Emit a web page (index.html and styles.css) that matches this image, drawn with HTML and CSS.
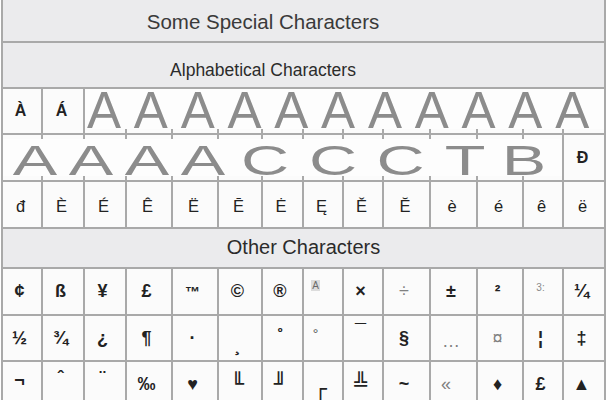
FILE: index.html
```html
<!DOCTYPE html>
<html>
<head>
<meta charset="utf-8">
<title>Some Special Characters</title>
<link rel="stylesheet" href="styles.css">
</head>
<body>
<div class="table">
  <div class="head title">Some Special Characters</div>
  <div class="head sub">Alphabetical Characters</div>

  <div class="stack s46">
    <div class="row h46">
      <div class="c b">À</div><div class="c b">Á</div>
      <div class="c"></div><div class="c"></div><div class="c"></div><div class="c"></div>
      <div class="c"></div><div class="c"></div><div class="c"></div><div class="c"></div>
      <div class="c"></div><div class="c"></div><div class="c"></div><div class="c"></div>
    </div>
    <div class="over over1">AAAAAAAAAAA</div>
  </div>

  <div class="stack s47">
    <div class="row h47">
      <div class="c"></div><div class="c"></div><div class="c"></div><div class="c"></div>
      <div class="c"></div><div class="c"></div><div class="c"></div><div class="c"></div>
      <div class="c"></div><div class="c"></div><div class="c"></div><div class="c"></div>
      <div class="c"></div><div class="c b">Đ</div>
    </div>
    <div class="over over2">
      <span class="wa">A</span><span class="wa">A</span><span class="wa">A</span><span class="wa">A</span>
      <span class="wc">C</span><span class="wc">C</span><span class="wc2">C</span><span class="wt">T</span><span class="wb">B</span>
    </div>
  </div>

  <div class="row h47 letters">
    <div class="c">đ</div><div class="c">È</div><div class="c">É</div><div class="c">Ê</div>
    <div class="c">Ë</div><div class="c">Ē</div><div class="c">Ė</div><div class="c">Ę</div>
    <div class="c">Ě</div><div class="c">Ĕ</div><div class="c">è</div><div class="c">é</div>
    <div class="c">ê</div><div class="c">ë</div>
  </div>

  <div class="head other">Other Characters</div>

  <div class="row h47 syms">
    <div class="c">¢</div><div class="c">ß</div><div class="c">¥</div><div class="c">£</div>
    <div class="c"><span class="tm">™</span></div><div class="c">©</div><div class="c">®</div>
    <div class="c"><span class="boxa">A</span></div>
    <div class="c">×</div><div class="c grey">÷</div><div class="c">±</div>
    <div class="c"><span class="sup">²</span></div>
    <div class="c"><span class="three">3:</span></div>
    <div class="c">¼</div>
  </div>

  <div class="row h46 syms">
    <div class="c">½</div><div class="c">¾</div><div class="c">¿</div><div class="c">¶</div>
    <div class="c">·</div><div class="c"><span class="ced">¸</span></div>
    <div class="c"><span class="ord">º</span></div><div class="c"><span class="deg">°</span></div>
    <div class="c"><span class="mac">¯</span></div><div class="c">§</div>
    <div class="c grey"><span class="ell">…</span></div><div class="c grey">¤</div>
    <div class="c">¦</div><div class="c">‡</div>
  </div>

  <div class="row h46 syms">
    <div class="c"><span class="hi">¬</span></div><div class="c"><span class="hi2">ˆ</span></div>
    <div class="c"><span class="hi2">¨</span></div><div class="c">‰</div>
    <div class="c">♥</div><div class="c box">╙</div><div class="c box">╜</div>
    <div class="c box"><span class="low">┌</span></div><div class="c box">╩</div>
    <div class="c">~</div><div class="c grey"><span class="lq">«</span></div><div class="c">♦</div>
    <div class="c">£</div><div class="c">▲</div>
  </div>
</div>
</body>
</html>
```
FILE: styles.css
```css
body {
  margin: 0;
  background: #ffffff;
  font-family: "Liberation Sans", Arial, sans-serif;
}

.table {
  width: 603px;
  margin-left: 1px;
  border-left: 2px solid #a9a9a9;
}

.head {
  box-sizing: border-box;
  border-right: 2px solid #a9a9a9;
  border-bottom: 2px solid #a9a9a9;
  background: #ebebed;
  text-align: center;
  color: #2b2b2b;
  line-height: normal;
}

.title {
  height: 43px;
  font-size: 20.5px;
  padding: 10px 81px 0 0;
  color: #3a3a3a;
}

.sub {
  height: 46px;
  font-size: 17.5px;
  padding: 17px 81px 0 0;
}

.other {
  height: 40px;
  font-size: 20px;
  padding-top: 7px;
}

.row {
  display: grid;
  grid-template-columns: 40px 42px 42px 46px 46px 44px 41px 40px 40px 47px 47px 46px 40px 42px;
}

.h46 { height: 46px; }
.h47 { height: 47px; }

.c {
  box-sizing: border-box;
  border-right: 2px solid #a9a9a9;
  border-bottom: 2px solid #a9a9a9;
  background: #fbfbfb;
  display: flex;
  align-items: center;
  justify-content: center;
  font-size: 16px;
  color: #222;
  padding-right: 3px;
}

.b { font-weight: bold; }

.stack { display: grid; }
.s46 { grid-template-rows: 46px; }
.s47 { grid-template-rows: 47px; }
.stack > * { grid-area: 1 / 1; }

.over {
  background: #fdfdfd;
  color: #8c8c8c;
  white-space: nowrap;
  z-index: 1;
}

.over1 {
  margin: 0 2px 6px 82px;
  height: 40px;
  font-size: 51px;
  line-height: 44px;
  letter-spacing: 12.8px;
  padding-left: 2px;
}

.over2 {
  margin: 4px 44px 6px 0;
  height: 37px;
  font-size: 43px;
  line-height: 42px;
  display: flex;
  padding-left: 3.5px;
}

.over2 span {
  display: block;
  flex: none;
  text-align: center;
  transform: scaleX(1.55);
}

.over2 .wa { width: 56px; }
.over2 .wc { width: 68px; }
.over2 .wc2 { width: 67px; }
.over2 .wt { width: 62px; }
.over2 .wb { width: 56px; }

.letters .c {
  font-size: 16.5px;
  padding-top: 3px;
}

.syms .c {
  font-size: 18px;
  font-weight: bold;
  padding-right: 5px;
}

.grey { color: #808080; }
.syms .grey { font-weight: normal; }

.tm { font-size: 15px; }
.sup { font-size: 17px; }

.boxa {
  font-size: 10px;
  font-weight: normal;
  color: #6a6a6a;
  background: #dcdcdc;
  padding: 0 1px;
  align-self: flex-start;
  margin-top: 11px;
  margin-right: 10px;
}

.three {
  font-size: 10px;
  font-weight: normal;
  color: #8a8a8a;
  align-self: flex-start;
  margin-top: 13px;
}

.ced { align-self: flex-end; margin-bottom: 4px; }
.ord { font-size: 13px; align-self: flex-start; margin-top: 9px; }
.deg { font-size: 14px; font-weight: normal; color: #555; margin-bottom: 8px; margin-right: 10px; }
.mac { align-self: flex-start; margin-top: 4px; font-size: 20px; }
.ell { align-self: flex-end; margin-bottom: 8px; }

.hi { margin-bottom: 8px; }
.hi2 { margin-bottom: 12px; }
.lq { margin-right: 10px; }

.syms .box {
  font-family: "DejaVu Sans", sans-serif;
  font-weight: normal;
  font-size: 21px;
}

.low { margin-top: 10px; }
```
